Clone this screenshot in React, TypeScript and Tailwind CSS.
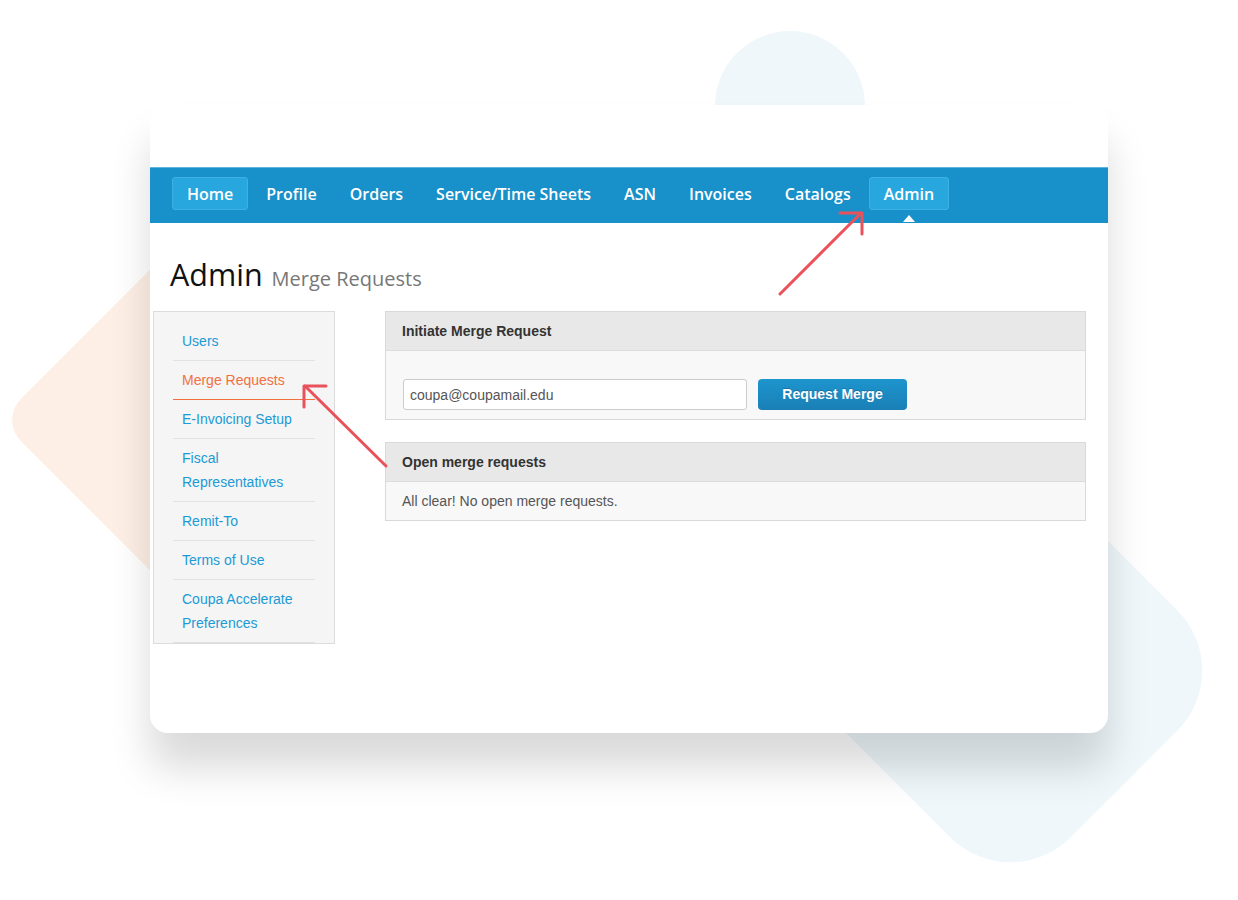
import React from "react";

const navItems = [
  "Home",
  "Profile",
  "Orders",
  "Service/Time Sheets",
  "ASN",
  "Invoices",
  "Catalogs",
  "Admin",
];

const sideItems = [
  "Users",
  "Merge Requests",
  "E-Invoicing Setup",
  "Fiscal Representatives",
  "Remit-To",
  "Terms of Use",
  "Coupa Accelerate Preferences",
];

export default function App() {
  return (
    <div className="relative w-[1238px] h-[900px] overflow-hidden bg-white">
      {/* background decorations */}
      <div className="absolute left-[715px] top-[31px] w-[150px] h-[150px] rounded-full bg-[#eff7fb]" />
      <div className="absolute left-[66px] top-[260px] w-[320px] h-[320px] rotate-45 rounded-[30px] bg-[#fdefe5]" />
      <div className="absolute left-[850px] top-[510px] w-[321px] h-[321px] rotate-45 rounded-[85px] bg-[#eff7fb]" />

      {/* card */}
      <div className="relative z-10 pt-[105px] pl-[150px]">
        <div
          className="w-[958px] h-[628px] rounded-[18px] bg-white shadow-[0_35px_40px_rgba(0,0,0,0.15)] overflow-hidden flex flex-col"
          style={{ fontFamily: '"Liberation Sans", Arial, sans-serif' }}
        >
          <div className="h-[62px] shrink-0" />
          {/* nav */}
          <div className="h-[56px] shrink-0 bg-[#1890c9] border-t border-[#5fb3df] flex items-start pt-[9px] pl-[20.5px]">
            {navItems.map((item) => {
              const active = item === "Home" || item === "Admin";
              return (
                <div
                  key={item}
                  className={
                    "relative mx-[1.5px] h-[33px] px-[14px] flex items-center rounded-[3px] border text-white text-[16px] font-semibold " +
                    (active
                      ? "bg-[#27a7de] border-[#3cb1e4]"
                      : "bg-transparent border-transparent")
                  }
                  style={{ fontFamily: '"Open Sans", sans-serif' }}
                >
                  {item}
                  {item === "Admin" && (
                    <span className="absolute left-1/2 -translate-x-1/2 top-full mt-[6px] w-0 h-0 border-l-[6px] border-r-[6px] border-b-[7px] border-l-transparent border-r-transparent border-b-white" />
                  )}
                </div>
              );
            })}
          </div>

          {/* title */}
          <div
            className="mt-[31px] pl-[20px] flex items-baseline h-[40px]"
            style={{ fontFamily: '"Open Sans", sans-serif' }}
          >
            <span className="text-[30.5px] leading-[40px] text-[#111]">Admin</span>
            <span className="ml-[9px] text-[20px] text-[#777]">Merge Requests</span>
          </div>

          {/* content */}
          <div className="mt-[17px] flex items-start">
            <div className="ml-[3px] w-[182px] border border-[#dcdcdc] bg-[#f5f5f5] px-[19px] pt-[10px]">
              {sideItems.map((s) => {
                const active = s === "Merge Requests";
                return (
                  <div
                    key={s}
                    className={
                      "py-[7px] pl-[9px] pr-[4px] text-[14px] leading-[24px] border-b " +
                      (active
                        ? "text-[#f2703f] border-[#f2703f]"
                        : "text-[#1b9ad6] border-[#e2e2e2]")
                    }
                  >
                    {s}
                  </div>
                );
              })}
            </div>

            <div className="ml-[50px] w-[701px] flex flex-col">
              <div className="border border-[#d9d9d9]">
                <div className="h-[39px] bg-[#e8e8e8] border-b border-[#dcdcdc] px-[16px] flex items-center text-[14px] font-bold text-[#333]">
                  Initiate Merge Request
                </div>
                <div className="bg-[#f8f8f8] pt-[28px] pb-[9px] px-[17px] flex items-center">
                  <input
                    readOnly
                    defaultValue="coupa@coupamail.edu"
                    className="w-[344px] h-[31px] bg-white border border-[#cccccc] rounded-[3px] px-[6px] text-[14px] text-[#555] outline-none"
                    style={{ fontFamily: '"Liberation Sans", Arial, sans-serif' }}
                  />
                  <button
                    className="ml-[11px] w-[149px] h-[31px] rounded-[4px] bg-gradient-to-b from-[#1d95ce] to-[#1a7fb6] text-white text-[14px] font-bold [text-shadow:0_-1px_0_rgba(0,0,0,0.2)]"
                    style={{ fontFamily: '"Liberation Sans", Arial, sans-serif' }}
                  >
                    Request Merge
                  </button>
                </div>
              </div>

              <div className="mt-[22px] border border-[#d9d9d9]">
                <div className="h-[39px] bg-[#e8e8e8] border-b border-[#dcdcdc] px-[16px] flex items-center text-[14px] font-bold text-[#333]">
                  Open merge requests
                </div>
                <div className="bg-[#f8f8f8] h-[38px] px-[16px] flex items-center text-[14px] text-[#555]">
                  All clear! No open merge requests.
                </div>
              </div>
            </div>
          </div>
        </div>
      </div>

      {/* annotation arrows */}
      <svg
        className="absolute inset-0 z-20 pointer-events-none"
        width="1238"
        height="900"
        viewBox="0 0 1238 900"
      >
        <g stroke="#e9515b" strokeWidth="3" fill="none" strokeLinecap="round" strokeLinejoin="round">
          <line x1="780" y1="294" x2="861" y2="213" />
          <polyline points="840,213 862,213 862,234" />
          <line x1="386" y1="466" x2="305" y2="386" />
          <polyline points="326,386 304,386 304,407" />
        </g>
      </svg>
    </div>
  );
}
